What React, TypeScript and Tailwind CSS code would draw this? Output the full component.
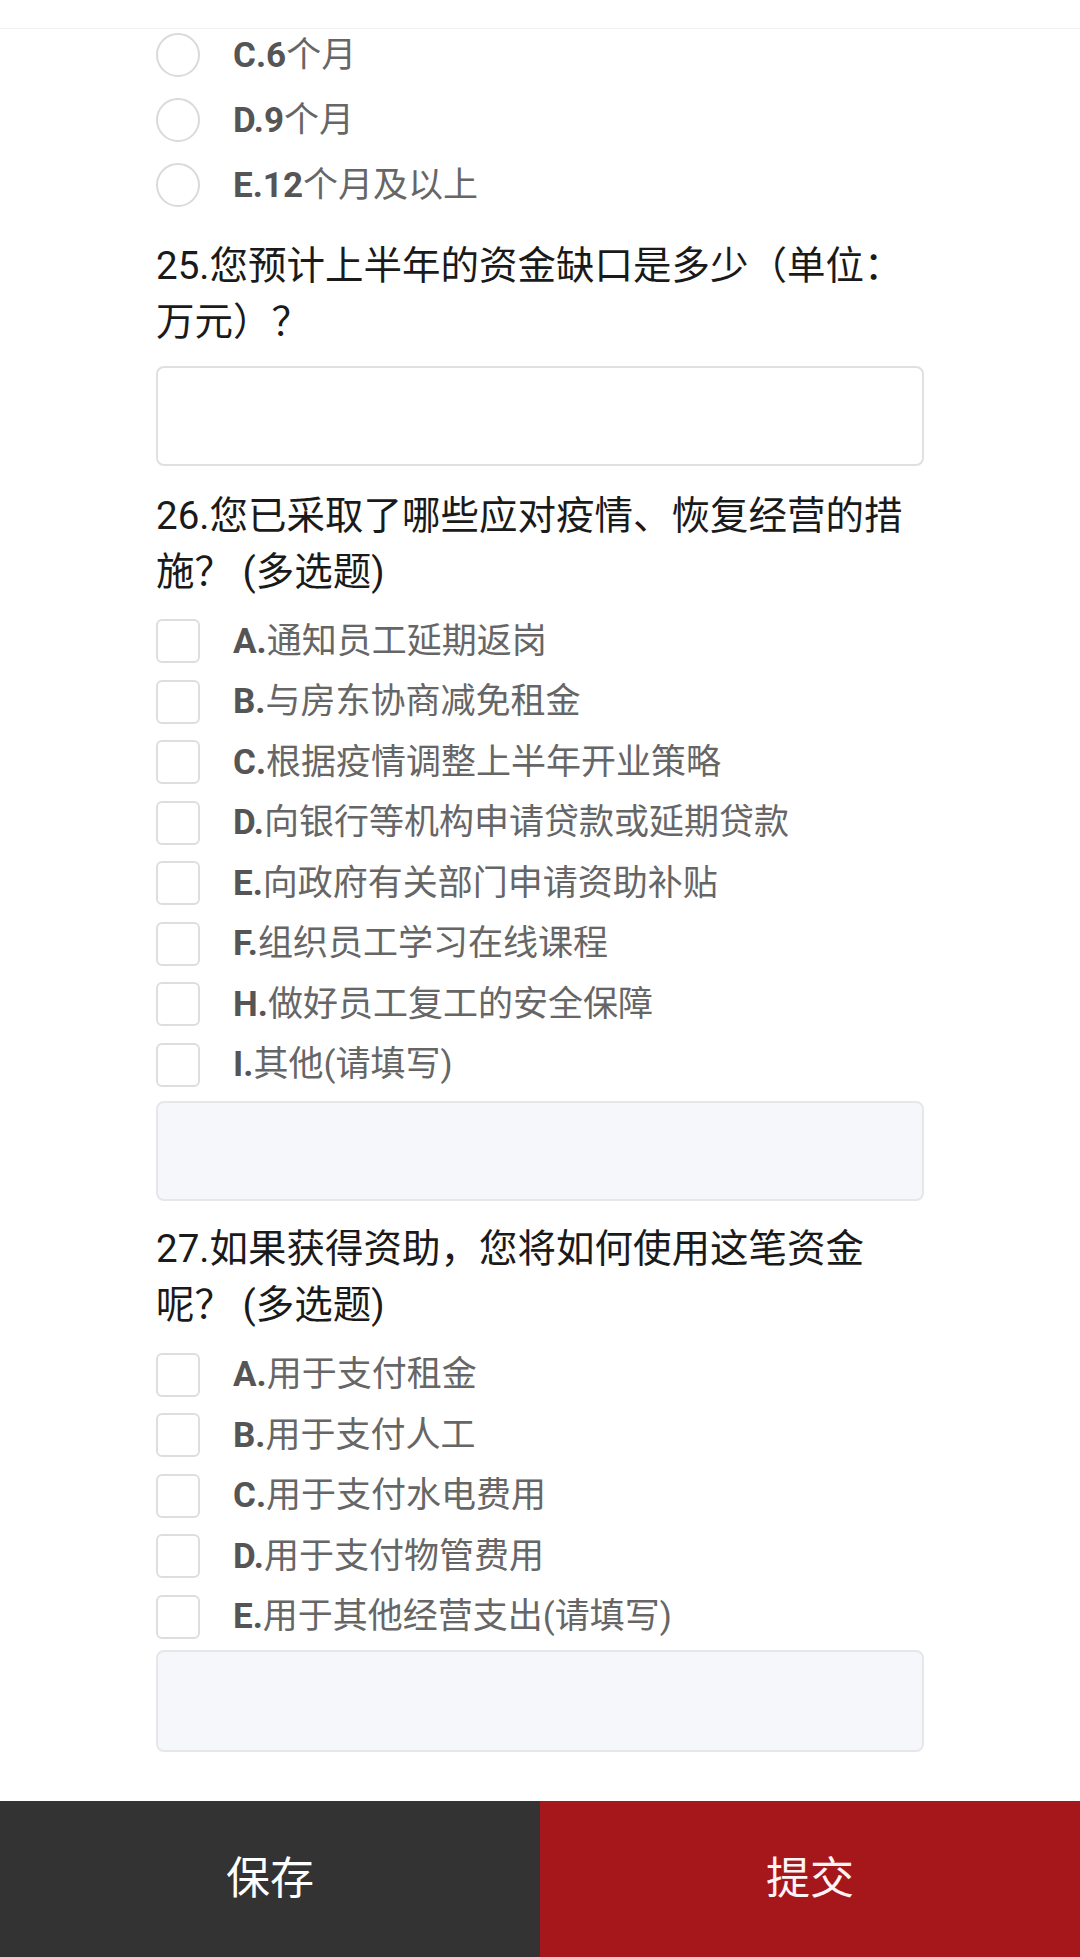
import React from 'react';

const font = { fontFamily: "Roboto, 'Noto Sans CJK SC', sans-serif" };

function Radio({ prefix, text }: { prefix: string; text: string }) {
    return (
        <div className="flex items-center h-[44px]">
            <span className="w-[44px] h-[44px] rounded-full border-2 border-[#dadada] bg-white shrink-0" />
            <span className="ml-[33px] text-[35px] leading-none text-[#666666]">
                <span className="font-bold text-[#555555]">{prefix}</span>
                {text}
            </span>
        </div>
    );
}

function Check({ letter, text }: { letter: string; text: string }) {
    return (
        <div className="flex items-center h-[44px]">
            <span className="w-[44px] h-[44px] rounded-[6px] border-2 border-[#dedede] bg-white shrink-0" />
            <span className="ml-[33px] text-[35px] leading-none text-[#666666] whitespace-nowrap">
                <span className="font-bold text-[#555555]">{letter}.</span>
                {text}
            </span>
        </div>
    );
}

function Question({ children, className }: { children: React.ReactNode; className?: string }) {
    return (
        <p className={`text-[38.5px] leading-[56px] text-[#1a1a1a] ${className ?? ''}`}>{children}</p>
    );
}

export default function App() {
    const q26 = [
        ['A', '通知员工延期返岗'],
        ['B', '与房东协商减免租金'],
        ['C', '根据疫情调整上半年开业策略'],
        ['D', '向银行等机构申请贷款或延期贷款'],
        ['E', '向政府有关部门申请资助补贴'],
        ['F', '组织员工学习在线课程'],
        ['H', '做好员工复工的安全保障'],
        ['I', '其他(请填写)'],
    ];
    const q27 = [
        ['A', '用于支付租金'],
        ['B', '用于支付人工'],
        ['C', '用于支付水电费用'],
        ['D', '用于支付物管费用'],
        ['E', '用于其他经营支出(请填写)'],
    ];

    return (
        <div className="w-[1080px] min-h-screen bg-white flex flex-col" style={font}>
            {/* Header strip */}
            <div className="h-[29px] border-b border-[#f0f0f0]" />

            <div className="pl-[156px] w-[924px] flex flex-col">
                {/* Q24 tail */}
                <div className="mt-[4px] flex flex-col gap-[21px]">
                    <Radio prefix="C.6" text="个月" />
                    <Radio prefix="D.9" text="个月" />
                    <Radio prefix="E.12" text="个月及以上" />
                </div>

                {/* Q25 */}
                <Question className="mt-[31px]">25.您预计上半年的资金缺口是多少（单位：万元）？</Question>
                <div className="mt-[16px] h-[100px] rounded-[8px] border-2 border-[#e0e0e0] bg-white" />

                {/* Q26 */}
                <Question className="mt-[22px]">26.您已采取了哪些应对疫情、恢复经营的措施？ (多选题)</Question>
                <div className="mt-[19px] flex flex-col gap-[16.5px]">
                    {q26.map(([l, t]) => (
                        <Check key={l} letter={l} text={t} />
                    ))}
                </div>
                <div className="mt-[14px] h-[100px] rounded-[8px] border-2 border-[#e6e7ea] bg-[#f6f7fb]" />

                {/* Q27 */}
                <Question className="mt-[20px]">27.如果获得资助，您将如何使用这笔资金呢？ (多选题)</Question>
                <div className="mt-[20px] flex flex-col gap-[16.5px]">
                    {q27.map(([l, t]) => (
                        <Check key={l} letter={l} text={t} />
                    ))}
                </div>
                <div className="mt-[11px] h-[102px] rounded-[8px] border-2 border-[#e6e7ea] bg-[#f6f7fb]" />
            </div>

            {/* Bottom actions */}
            <div className="mt-auto pt-[48px]">
                <div className="flex h-[156px]">
                    <button className="w-1/2 bg-[#333333] text-white text-[44px] leading-none">保存</button>
                    <button className="w-1/2 bg-[#a6171b] text-[#fff4f4] text-[44px] leading-none">提交</button>
                </div>
            </div>
        </div>
    );
}
